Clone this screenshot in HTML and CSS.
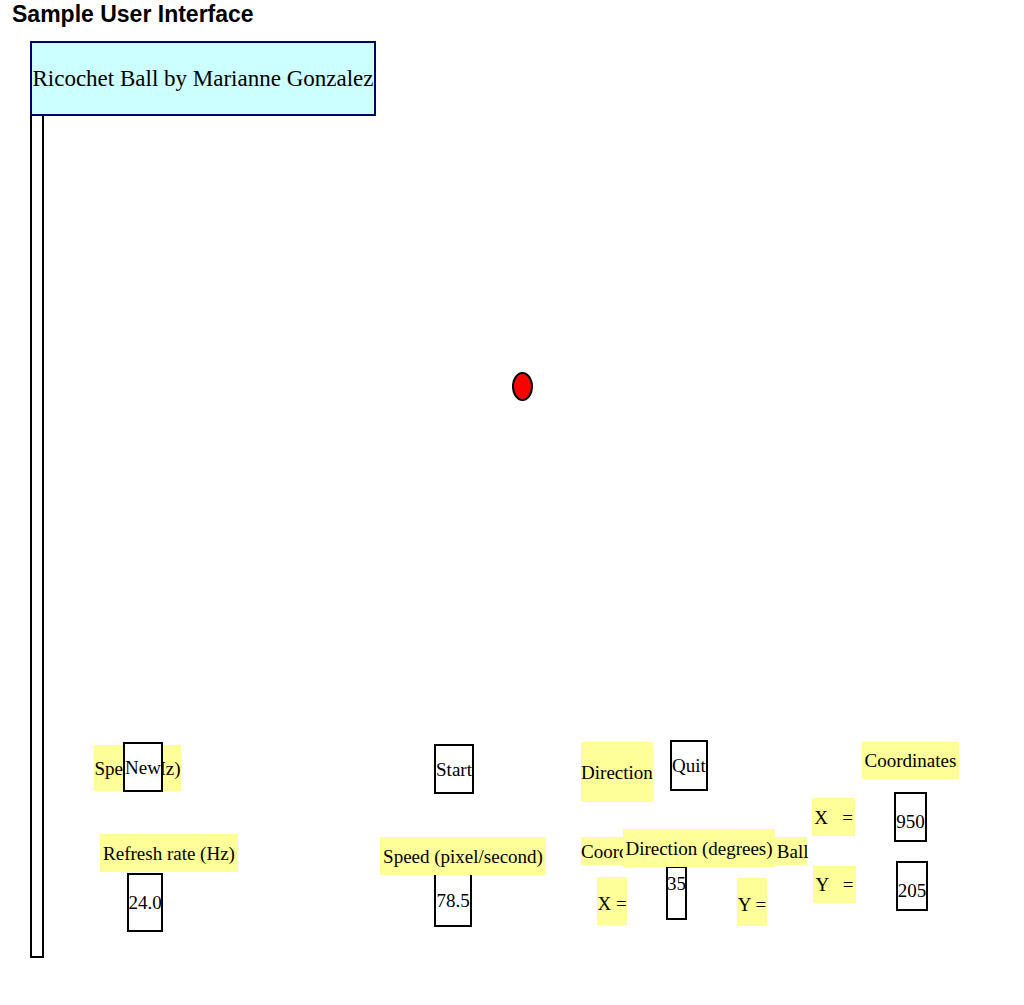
FILE: index.html
```html
<!DOCTYPE html>
<html>
<head>
<meta charset="utf-8">
<title>Sample User Interface</title>
<link rel="stylesheet" href="styles.css">
</head>
<body>
<div class="screen">
  <h1 class="title">Sample User Interface</h1>

  <div class="w header">Ricochet Ball by Marianne Gonzalez</div>
  <div class="w vbar"></div>
  <div class="w ball"></div>

  <div class="w label l-speedhz">Speed (Hz)</div>
  <div class="w btn b-new">New</div>
  <div class="w label l-refresh">Refresh rate (Hz)</div>
  <div class="w field f-refresh">24.0</div>

  <div class="w btn b-start">Start</div>
  <div class="w field f-speed">78.5</div>
  <div class="w label l-speedpx">Speed (pixel/second)</div>

  <div class="w label l-direction">Direction</div>
  <div class="w btn b-quit">Quit</div>
  <div class="w label l-coordball">Coordinates of Bouncing Ball</div>
  <div class="w label l-dirdeg">Direction (degrees)</div>
  <div class="w field f-dir">35</div>
  <div class="w label l-x1">X =</div>
  <div class="w label l-y1">Y =</div>

  <div class="w label l-coords">Coordinates</div>
  <div class="w label l-x2">X   =</div>
  <div class="w field f-x">950</div>
  <div class="w label l-y2">Y   =</div>
  <div class="w field f-y">205</div>
</div>
</body>
</html>
```
FILE: styles.css
```css
html, body {
  margin: 0;
  padding: 0;
  background: #ffffff;
}

.screen {
  position: relative;
  width: 1024px;
  height: 1005px;
  overflow: hidden;
  font-family: "Liberation Serif", "Times New Roman", serif;
  font-size: 19px;
  color: #000;
}

.title {
  margin: 0;
  padding: 1px 0 0 12px;
  font-family: "Liberation Sans", Arial, sans-serif;
  font-weight: bold;
  font-size: 23px;
  line-height: 26px;
}

.w {
  position: absolute;
  box-sizing: border-box;
  display: flex;
  align-items: center;
  justify-content: center;
  white-space: pre;
  line-height: 1;
}

.header {
  left: 30px; top: 41px; width: 346px; height: 75px;
  border: 2px solid #000066;
  background: #ccffff;
  font-size: 23px;
  z-index: 2;
}

.vbar {
  left: 30px; top: 114px; width: 14px; height: 844px;
  border: 2px solid #000;
  background: #fff;
  z-index: 1;
}

.ball {
  left: 512px; top: 372px; width: 21px; height: 29px;
  border: 2px solid #000;
  border-radius: 50%;
  background: #ff0000;
}

.label {
  background: #ffff99;
}

.btn, .field {
  border: 2px solid #000;
  background: #fff;
}

.l-speedhz { left: 94px; top: 745px; width: 87px; height: 46px; z-index: 1; }
.b-new { left: 123px; top: 742px; width: 40px; height: 50px; z-index: 2; }
.l-refresh { left: 100px; top: 834px; width: 138px; height: 38px; }
.f-refresh { left: 127px; top: 873px; width: 36px; height: 59px; }

.b-start { left: 434px; top: 744px; width: 40px; height: 50px; }
.f-speed { left: 434px; top: 866px; width: 38px; height: 61px; padding-top: 8px; z-index: 1; }
.l-speedpx { left: 380px; top: 837px; width: 166px; height: 38px; z-index: 2; }

.l-direction { left: 581px; top: 742px; width: 72px; height: 60px; }
.b-quit { left: 670px; top: 740px; width: 38px; height: 51px; }
.l-coordball { left: 581px; top: 837px; width: 226px; height: 28px; justify-content: flex-start; z-index: 1; }
.l-dirdeg { left: 623px; top: 829px; width: 152px; height: 38px; z-index: 2; }
.f-dir { left: 666px; top: 866px; width: 21px; height: 54px; padding-bottom: 20px; }
.l-x1 { left: 597px; top: 877px; width: 30px; height: 48px; padding-top: 4px; }
.l-y1 { left: 737px; top: 878px; width: 30px; height: 48px; padding-top: 4px; }

.l-coords { left: 862px; top: 742px; width: 97px; height: 37px; }
.l-x2 { left: 812px; top: 798px; width: 43px; height: 38px; }
.f-x { left: 894px; top: 792px; width: 33px; height: 50px; padding-top: 8px; }
.l-y2 { left: 813px; top: 866px; width: 43px; height: 37px; }
.f-y { left: 896px; top: 861px; width: 32px; height: 50px; padding-top: 8px; }
```
